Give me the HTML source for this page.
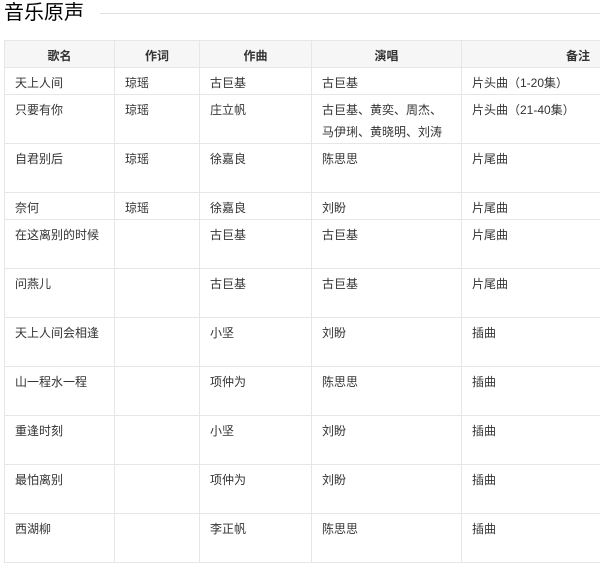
<!DOCTYPE html>
<html><head><meta charset="utf-8"><style>
body{margin:0;background:#fff;width:600px;height:561px;overflow:hidden;font-family:"Liberation Sans","Noto Sans CJK SC",sans-serif;color:#333;}
.t{position:absolute;left:4px;top:0;font-size:20px;line-height:26px;color:#000;}
.l{position:absolute;left:100px;right:0;top:13px;height:1px;background:#e0e0e0;}
table{position:absolute;left:4px;top:40px;border-collapse:collapse;table-layout:fixed;width:690px;font-size:12px;}
td,th{border:1px solid #e6e6e6;padding:4px 10px 0 10px;vertical-align:top;line-height:22px;text-align:left;font-weight:normal;overflow:hidden;}
th{background:#f6f6f6;font-weight:bold;text-align:center;height:22px;color:#333;}
tr.s td{height:22px;}
tr.b td{height:44px;}
tr.c td{height:43px;}
</style></head><body>
<div class="t">音乐原声</div><div class="l"></div>
<table>
<colgroup><col style="width:110px"><col style="width:85px"><col style="width:112px"><col style="width:150px"><col style="width:233px"></colgroup>
<tr><th>歌名</th><th>作词</th><th>作曲</th><th>演唱</th><th>备注</th></tr>
<tr class="s"><td>天上人间</td><td>琼瑶</td><td>古巨基</td><td>古巨基</td><td>片头曲（1-20集）</td></tr>
<tr class="c"><td>只要有你</td><td>琼瑶</td><td>庄立帆</td><td>古巨基、黄奕、周杰、马伊琍、黄晓明、刘涛</td><td>片头曲（21-40集）</td></tr>
<tr class="b"><td>自君别后</td><td>琼瑶</td><td>徐嘉良</td><td>陈思思</td><td>片尾曲</td></tr>
<tr class="s"><td>奈何</td><td>琼瑶</td><td>徐嘉良</td><td>刘盼</td><td>片尾曲</td></tr>
<tr class="b"><td>在这离别的时候</td><td></td><td>古巨基</td><td>古巨基</td><td>片尾曲</td></tr>
<tr class="b"><td>问燕儿</td><td></td><td>古巨基</td><td>古巨基</td><td>片尾曲</td></tr>
<tr class="b"><td>天上人间会相逢</td><td></td><td>小坚</td><td>刘盼</td><td>插曲</td></tr>
<tr class="b"><td>山一程水一程</td><td></td><td>项仲为</td><td>陈思思</td><td>插曲</td></tr>
<tr class="b"><td>重逢时刻</td><td></td><td>小坚</td><td>刘盼</td><td>插曲</td></tr>
<tr class="b"><td>最怕离别</td><td></td><td>项仲为</td><td>刘盼</td><td>插曲</td></tr>
<tr class="b"><td>西湖柳</td><td></td><td>李正帆</td><td>陈思思</td><td>插曲</td></tr>
</table>
</body></html>
